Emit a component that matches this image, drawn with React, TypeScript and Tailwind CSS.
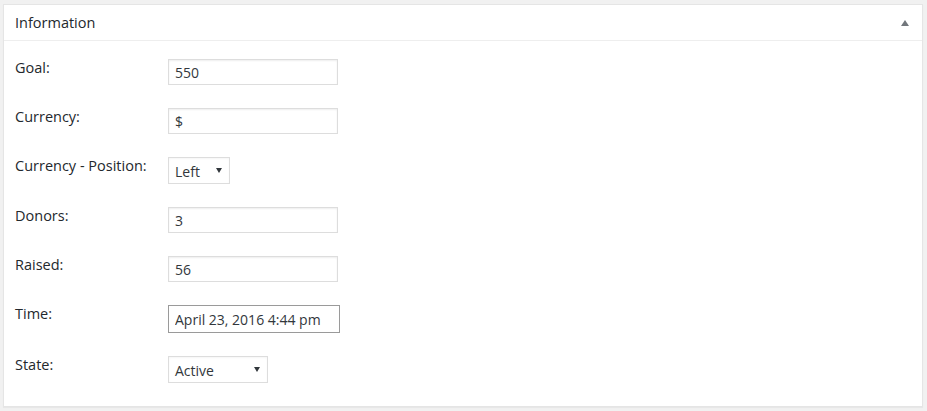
import React from "react";

type Field = {
  label: string;
  kind: "input" | "select" | "time";
  value: string;
  width?: string;
};

const fields: Field[] = [
  { label: "Goal:", kind: "input", value: "550" },
  { label: "Currency:", kind: "input", value: "$" },
  { label: "Currency - Position:", kind: "select", value: "Left", width: "w-[62px]" },
  { label: "Donors:", kind: "input", value: "3" },
  { label: "Raised:", kind: "input", value: "56" },
  { label: "Time:", kind: "time", value: "April 23, 2016 4:44 pm" },
  { label: "State:", kind: "select", value: "Active", width: "w-[100px]" },
];

const Control = ({ field }: { field: Field }) => {
  if (field.kind === "select") {
    return (
      <div
        className={`${field.width} h-[27px] flex items-center justify-between pl-[6px] pr-[7px] border border-[#ddd] bg-white shadow-[inset_0_1px_2px_rgba(0,0,0,0.04)] text-[14px] text-[#32373c]`}
      >
        <span className="pt-[1px]">{field.value}</span>
        <svg width="6" height="5" viewBox="0 0 6 5" className="shrink-0">
          <path d="M0 0 L6 0 L3 5 Z" fill="#32373c" />
        </svg>
      </div>
    );
  }
  if (field.kind === "time") {
    return (
      <input
        readOnly
        value={field.value}
        className="w-[172px] h-[28px] px-[6px] border border-[#9a9a9a] bg-white text-[14px] text-[#32373c] outline-none"
      />
    );
  }
  return (
    <input
      readOnly
      value={field.value}
      className="w-[170px] h-[26px] px-[6px] border border-[#ddd] bg-white shadow-[inset_0_1px_2px_rgba(0,0,0,0.07)] text-[14px] text-[#32373c] outline-none"
    />
  );
};

export default function App() {
  return (
    <div className="h-[411px] w-[927px] bg-[#f1f1f1] pt-[4px] pl-[3px] font-['Open_Sans',sans-serif] text-[#23282d]">
      <div className="w-[920px] border border-[#e5e5e5] bg-white shadow-[0_1px_1px_rgba(0,0,0,0.04)]">
        {/* header */}
        <div className="h-[36px] flex items-center justify-between pl-[11px] pr-[13px] border-b border-[#eee]">
          <span className="text-[14.5px] leading-5">Information</span>
          <svg width="8" height="6" viewBox="0 0 8 6" className="shrink-0">
            <path d="M4 0 L8 6 L0 6 Z" fill="#72777c" />
          </svg>
        </div>

        {/* fields */}
        <div className="flex flex-col gap-[23px] pt-[18px] pb-[23px] pl-[11px]">
          {fields.map((f) => (
            <div key={f.label} className="flex items-start">
              <label className="w-[153px] text-[14.5px] leading-5 text-[#23282d] -mt-[1px]">{f.label}</label>
              <Control field={f} />
            </div>
          ))}
        </div>
      </div>
    </div>
  );
}
